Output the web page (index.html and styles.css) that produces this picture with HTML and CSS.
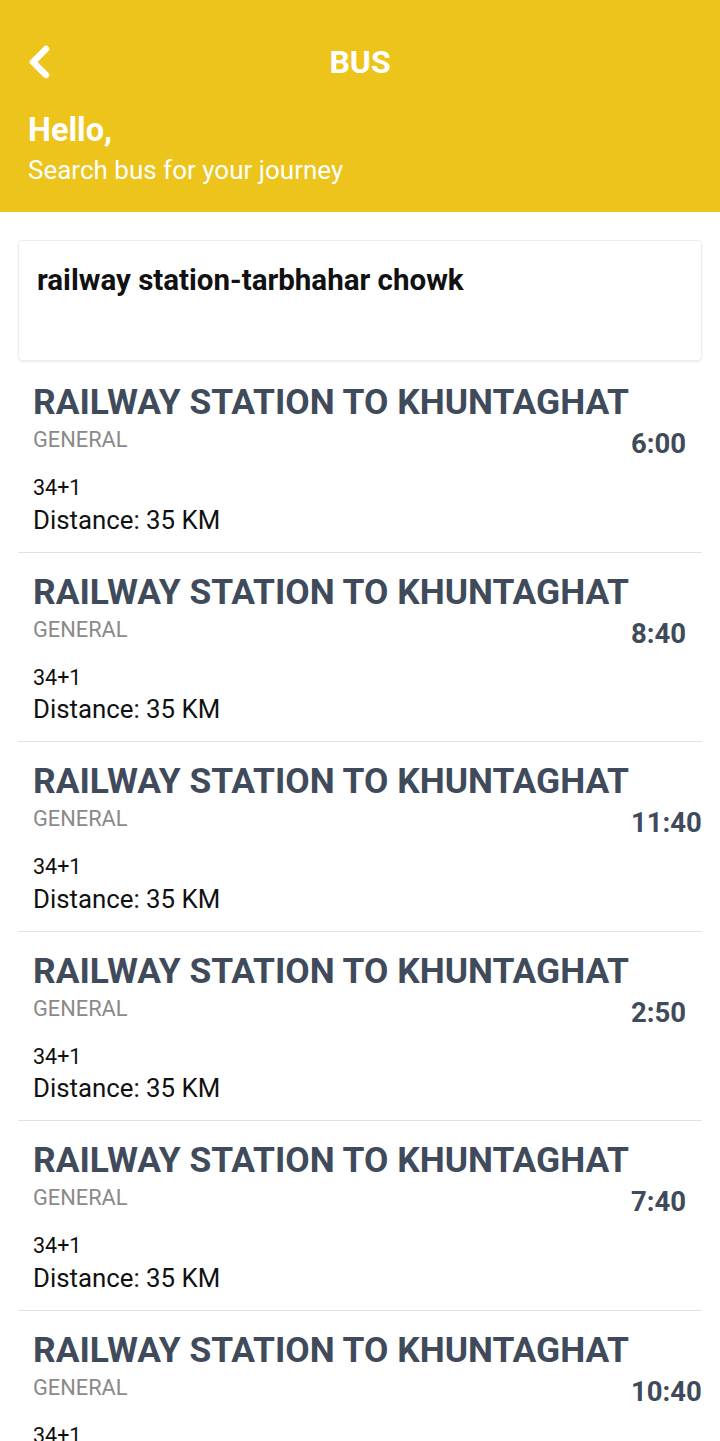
FILE: index.html
```html
<!DOCTYPE html>
<html>
<head>
<meta charset="utf-8">
<link rel="stylesheet" href="styles.css">
</head>
<body>
<header class="top">
  <div class="bar">
    <svg class="back" width="26" height="34" viewBox="0 0 26 34"><path d="M20 4 L7 17 L20 30" fill="none" stroke="#fff" stroke-width="6.5" stroke-linecap="round" stroke-linejoin="round"/></svg>
    <div class="title">BUS</div>
  </div>
  <div class="hello">Hello,</div>
  <div class="sub">Search bus for your journey</div>
</header>
<main class="content">
  <div class="search">railway station-tarbhahar chowk</div>
  <ul class="list">
    <li class="item"><div class="route">RAILWAY STATION TO KHUNTAGHAT</div><div class="row"><span class="type">GENERAL</span><span class="time">6:00</span></div><div class="seats">34+1</div><div class="dist">Distance: 35 KM</div></li>
    <li class="item"><div class="route">RAILWAY STATION TO KHUNTAGHAT</div><div class="row"><span class="type">GENERAL</span><span class="time">8:40</span></div><div class="seats">34+1</div><div class="dist">Distance: 35 KM</div></li>
    <li class="item"><div class="route">RAILWAY STATION TO KHUNTAGHAT</div><div class="row"><span class="type">GENERAL</span><span class="time">11:40</span></div><div class="seats">34+1</div><div class="dist">Distance: 35 KM</div></li>
    <li class="item"><div class="route">RAILWAY STATION TO KHUNTAGHAT</div><div class="row"><span class="type">GENERAL</span><span class="time">2:50</span></div><div class="seats">34+1</div><div class="dist">Distance: 35 KM</div></li>
    <li class="item"><div class="route">RAILWAY STATION TO KHUNTAGHAT</div><div class="row"><span class="type">GENERAL</span><span class="time">7:40</span></div><div class="seats">34+1</div><div class="dist">Distance: 35 KM</div></li>
    <li class="item"><div class="route">RAILWAY STATION TO KHUNTAGHAT</div><div class="row"><span class="type">GENERAL</span><span class="time">10:40</span></div><div class="seats">34+1</div><div class="dist">Distance: 35 KM</div></li>
  </ul>
</main>
</body>
</html>
```
FILE: styles.css
```css
html, body {
  margin: 0;
  padding: 0;
  background: #fff;
  font-family: Roboto, "Liberation Sans", sans-serif;
  overflow: hidden;
}
.top {
  background: #edc41b;
  color: #fff;
  height: 212px;
  box-sizing: border-box;
  padding: 44px 28px 0 28px;
}
.bar {
  display: flex;
  align-items: center;
  height: 36px;
}
.back {
  display: block;
  margin-left: -2px;
}
.title {
  flex: 1;
  text-align: center;
  font-weight: 700;
  font-size: 32px;
  margin-right: 24px;
  line-height: 36px;
}
.hello {
  margin-top: 30px;
  font-size: 32.5px;
  font-weight: 700;
  line-height: 40px;
}
.sub {
  font-size: 26px;
  line-height: 34px;
  margin-top: 3px;
}
.content {
  padding: 28px 18px 0 18px;
}
.search {
  height: 121px;
  box-sizing: border-box;
  border: 1px solid #ececec;
  border-radius: 4px;
  box-shadow: 0 1px 2px rgba(0,0,0,0.08);
  padding: 21px 18px 0 18px;
  font-size: 29.5px;
  font-weight: 700;
  color: #111;
  line-height: 36px;
}
.list {
  list-style: none;
  margin: 2px 0 0 0;
  padding: 0;
}
.item {
  border-bottom: 1px solid #e2e2e2;
  padding: 19px 15px 17px 15px;
}
.route {
  font-size: 35.4px;
  font-weight: 700;
  color: #3f4b5b;
  line-height: 40px;
  white-space: nowrap;
}
.row {
  margin-top: 6px;
  display: flex;
  justify-content: space-between;
  align-items: flex-start;
  height: 31px;
}
.type {
  font-size: 21.8px;
  color: #8a8a8a;
  line-height: 24px;
}
.time {
  width: 56px;
  white-space: nowrap;
  font-size: 27.5px;
  font-weight: 700;
  color: #3f4b5b;
  line-height: 32px;
}
.seats {
  margin-top: 16px;
  font-size: 21.5px;
  line-height: 26px;
  color: #111;
}
.dist {
  margin-top: 3.5px;
  font-size: 25.8px;
  line-height: 30px;
  color: #111;
}
```
